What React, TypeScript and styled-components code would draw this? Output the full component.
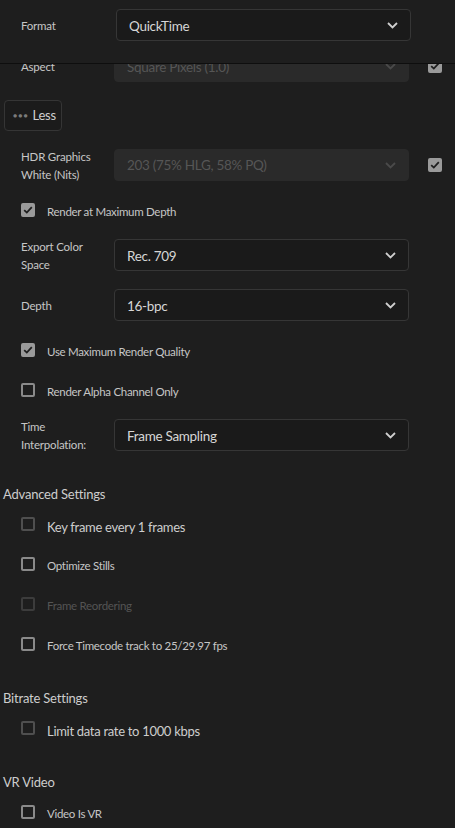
import React from "react";
import styled, { createGlobalStyle } from "styled-components";

const GlobalStyle = createGlobalStyle`
  html, body {
    margin: 0;
    padding: 0;
    background: #1e1e1e;
  }
  body {
    font-family: Lato, "Open Sans", sans-serif;
    color: #c8c8c8;
  }
`;

const Page = styled.div`
  width: 455px;
  height: 828px;
  display: flex;
  flex-direction: column;
  background: #1e1e1e;
  overflow: hidden;
`;

const Header = styled.div`
  height: 64px;
  flex: none;
  display: flex;
  align-items: flex-start;
  padding: 9px 0 0 21px;
  box-sizing: border-box;
  border-bottom: 1px solid #0e0e0e;
`;

const Viewport = styled.div`
  flex: 1;
  overflow: hidden;
`;

// the list is scrolled a little, so the Aspect row slides under the header
const Content = styled.div`
  margin-top: -23px;
  display: flex;
  flex-direction: column;
`;

const FieldRow = styled.div<{ $h?: number }>`
  height: ${(p) => p.$h ?? 50}px;
  display: flex;
  align-items: center;
  padding-left: 21px;
`;

const Label = styled.div<{ $w?: number }>`
  width: ${(p) => p.$w ?? 93}px;
  flex: none;
  font-size: 11.5px;
  letter-spacing: -0.2px;
  line-height: 18px;
  padding-top: 2px;
  color: #c6c6c6;
`;

const Select = styled.div<{ $disabled?: boolean }>`
  width: 295px;
  height: 32px;
  box-sizing: border-box;
  display: flex;
  align-items: center;
  justify-content: space-between;
  padding: 1px 12px 0 12px;
  border-radius: 4px;
  border: 1px solid ${(p) => (p.$disabled ? "#2a2a2a" : "#363636")};
  background: ${(p) => (p.$disabled ? "#2a2a2a" : "#1a1a1a")};
  color: ${(p) => (p.$disabled ? "#565656" : "#d6d6d6")};
  font-size: 13.5px;
  letter-spacing: -0.3px;
`;

const Chevron = ({ dim }: { dim?: boolean }) => (
  <svg width="11" height="7" viewBox="0 0 11 7">
    <path
      d="M1 1 L5.5 5.5 L10 1"
      fill="none"
      stroke={dim ? "#4a4a4a" : "#cfcfcf"}
      strokeWidth="1.8"
    />
  </svg>
);

const Box = styled.span<{ $checked?: boolean; $tone?: "normal" | "dim" | "off" }>`
  width: 14px;
  height: 14px;
  flex: none;
  box-sizing: border-box;
  border-radius: 2px;
  display: inline-flex;
  align-items: center;
  justify-content: center;
  border: 2px solid
    ${(p) =>
      p.$checked
        ? "#9a9a9a"
        : p.$tone === "dim"
        ? "#4f4f4f"
        : p.$tone === "off"
        ? "#3c3c3c"
        : "#8a8a8a"};
  background: ${(p) => (p.$checked ? "#9a9a9a" : "transparent")};
`;

const Check = () => (
  <svg width="10" height="8" viewBox="0 0 10 8">
    <path d="M1.2 4.2 L3.8 6.6 L8.8 1.2" fill="none" stroke="#1e1e1e" strokeWidth="1.8" />
  </svg>
);

const CheckBox = ({ checked, tone }: { checked?: boolean; tone?: "normal" | "dim" | "off" }) => (
  <Box $checked={checked} $tone={tone}>
    {checked && <Check />}
  </Box>
);

const SideCheck = styled.div`
  margin-left: 19px;
  display: flex;
`;

const CheckRow = styled.div`
  height: 40px;
  display: flex;
  align-items: center;
  gap: 12px;
  padding-left: 21px;
`;

const CheckText = styled.span<{ $big?: boolean; $off?: boolean }>`
  font-size: ${(p) => (p.$big ? 13 : 11.5)}px;
  letter-spacing: -0.3px;
  padding-top: ${(p) => (p.$big ? 5 : 2)}px;
  color: ${(p) => (p.$off ? "#545454" : p.$big ? "#cdcdcd" : "#c6c6c6")};
`;

const LessButton = styled.div`
  margin-left: 4px;
  width: 58px;
  height: 31px;
  box-sizing: border-box;
  border: 1px solid #353535;
  border-radius: 4px;
  background: #1b1b1b;
  display: flex;
  align-items: center;
  gap: 4px;
  padding-left: 8px;
  font-size: 13px;
  letter-spacing: -0.3px;
  color: #cfcfcf;
`;

const Dots = styled.span`
  color: #7a7a7a;
  font-size: 7px;
  letter-spacing: 1px;
`;

const ButtonRow = styled.div`
  height: 48px;
  display: flex;
  align-items: center;
`;

const SectionTitle = styled.div`
  padding: 24px 0 0 3px;
  font-size: 13px;
  letter-spacing: -0.2px;
  line-height: 20px;
  color: #cdcdcd;
`;

const App: React.FC = () => {
  return (
    <>
      <GlobalStyle />
      <Page>
        <Header>
          <Label $w={95} style={{ lineHeight: "30px" }}>Format</Label>
          <Select>
            QuickTime
            <Chevron />
          </Select>
        </Header>
        <Viewport>
          <Content>
            <FieldRow>
              <Label>Aspect</Label>
              <Select $disabled>
                Square Pixels (1.0)
                <Chevron dim />
              </Select>
              <SideCheck>
                <CheckBox checked />
              </SideCheck>
            </FieldRow>
            <ButtonRow>
              <LessButton>
                <Dots>●●●</Dots>Less
              </LessButton>
            </ButtonRow>
            <FieldRow $h={51}>
              <Label>
                HDR Graphics
                <br />
                White (Nits)
              </Label>
              <Select $disabled>
                203 (75% HLG, 58% PQ)
                <Chevron dim />
              </Select>
              <SideCheck>
                <CheckBox checked />
              </SideCheck>
            </FieldRow>
            <CheckRow>
              <CheckBox checked />
              <CheckText>Render at Maximum Depth</CheckText>
            </CheckRow>
            <FieldRow>
              <Label>
                Export Color
                <br />
                Space
              </Label>
              <Select>
                Rec. 709
                <Chevron />
              </Select>
            </FieldRow>
            <FieldRow>
              <Label>Depth</Label>
              <Select>
                16-bpc
                <Chevron />
              </Select>
            </FieldRow>
            <CheckRow>
              <CheckBox checked />
              <CheckText>Use Maximum Render Quality</CheckText>
            </CheckRow>
            <CheckRow>
              <CheckBox />
              <CheckText>Render Alpha Channel Only</CheckText>
            </CheckRow>
            <FieldRow>
              <Label>
                Time
                <br />
                Interpolation:
              </Label>
              <Select>
                Frame Sampling
                <Chevron />
              </Select>
            </FieldRow>

            <SectionTitle>Advanced Settings</SectionTitle>
            <CheckRow>
              <CheckBox tone="dim" />
              <CheckText $big>Key frame every 1 frames</CheckText>
            </CheckRow>
            <CheckRow>
              <CheckBox />
              <CheckText>Optimize Stills</CheckText>
            </CheckRow>
            <CheckRow>
              <CheckBox tone="off" />
              <CheckText $off>Frame Reordering</CheckText>
            </CheckRow>
            <CheckRow>
              <CheckBox />
              <CheckText>Force Timecode track to 25/29.97 fps</CheckText>
            </CheckRow>

            <SectionTitle>Bitrate Settings</SectionTitle>
            <CheckRow>
              <CheckBox tone="dim" />
              <CheckText $big>Limit data rate to 1000 kbps</CheckText>
            </CheckRow>

            <SectionTitle>VR Video</SectionTitle>
            <CheckRow>
              <CheckBox />
              <CheckText>Video Is VR</CheckText>
            </CheckRow>
          </Content>
        </Viewport>
      </Page>
    </>
  );
};

export default App;
